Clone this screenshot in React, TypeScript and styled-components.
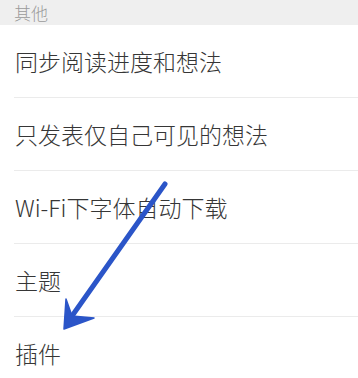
import styled, { createGlobalStyle } from 'styled-components'

const GlobalStyle = createGlobalStyle`
  html, body {
    margin: 0;
    padding: 0;
    background: #fff;
  }
  body {
    font-family: "Noto Sans CJK SC", "Noto Sans", sans-serif;
  }
`

const Page = styled.div`
  position: relative;
  width: 358px;
  height: 378px;
  overflow: hidden;
  background: #fff;
`

const SectionHeader = styled.div`
  height: 25px;
  display: flex;
  align-items: center;
  padding-left: 14px;
  background: #efefef;
  color: #9a9a9a;
  font-size: 17px;
  font-weight: 300;
`

const List = styled.div`
  display: flex;
  flex-direction: column;
`

const Row = styled.div`
  height: 72px;
  display: flex;
  align-items: center;
  padding-left: 15px;
  color: #363636;
  font-size: 23px;
  font-weight: 300;
`

const Divider = styled.div`
  height: 1px;
  margin-left: 14px;
  background: #ebebeb;
`

// hand-drawn annotation arrow that sits over the list
const Overlay = styled.svg`
  position: absolute;
  left: 0;
  top: 0;
  pointer-events: none;
`

const items = ['同步阅读进度和想法', '只发表仅自己可见的想法', 'Wi-Fi下字体自动下载', '主题', '插件']

export default function App() {
  return (
    <Page>
      <GlobalStyle />
      <SectionHeader>其他</SectionHeader>
      <List>
        {items.map((label, i) => (
          <div key={label}>
            <Row>{label}</Row>
            {i < items.length - 1 && <Divider />}
          </div>
        ))}
      </List>
      <Overlay width="358" height="378" viewBox="0 0 358 378">
        <line x1="165" y1="184" x2="72" y2="316" stroke="#2b55c8" strokeWidth="5" strokeLinecap="round" />
        <polygon
          points="64,329 66,299 72,316 94,318"
          fill="#2b55c8"
          stroke="#2b55c8"
          strokeWidth="1.5"
          strokeLinejoin="round"
        />
      </Overlay>
    </Page>
  )
}
